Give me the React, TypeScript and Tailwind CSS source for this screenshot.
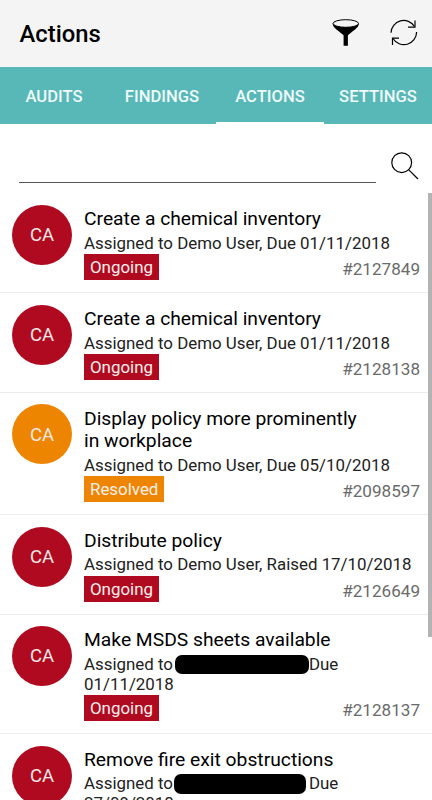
import clsx from 'clsx';

type Status = 'Ongoing' | 'Resolved';

interface Action {
  id: string;
  title: string[];
  assignee?: string;
  redacted?: string;
  date?: string;
  status: Status;
}

const TABS = ['AUDITS', 'FINDINGS', 'ACTIONS', 'SETTINGS'];

const ACTIONS: Action[] = [
  {
    id: '#2127849',
    title: ['Create a chemical inventory'],
    assignee: 'Demo User, Due 01/11/2018',
    status: 'Ongoing',
  },
  {
    id: '#2128138',
    title: ['Create a chemical inventory'],
    assignee: 'Demo User, Due 01/11/2018',
    status: 'Ongoing',
  },
  {
    id: '#2098597',
    title: ['Display policy more prominently', 'in workplace'],
    assignee: 'Demo User, Due 05/10/2018',
    status: 'Resolved',
  },
  {
    id: '#2126649',
    title: ['Distribute policy'],
    assignee: 'Demo User, Raised 17/10/2018',
    status: 'Ongoing',
  },
  {
    id: '#2128137',
    title: ['Make MSDS sheets available'],
    redacted: 'ml-[2px] w-[134px] h-[19px]',
    date: '01/11/2018',
    status: 'Ongoing',
  },
  {
    id: '#2128136',
    title: ['Remove fire exit obstructions'],
    redacted: 'ml-px mr-[3px] w-[132px] h-[20px]',
    date: '27/09/2018',
    status: 'Ongoing',
  },
];

const STATUS_COLOR: Record<Status, string> = {
  Ongoing: 'bg-[#b00a20]',
  Resolved: 'bg-[#ee8500]',
};

function FilterIcon() {
  return (
    <svg width="28" height="28" viewBox="0 0 28 28" fill="none">
      <path
        d="M0.600 4.500C0.800 9 7 12 11.600 16.200V26.800h4.300V16.200C20.500 12 26.800 9 27 4.500Z"
        fill="black"
      />
      <ellipse cx="13.800" cy="4.500" rx="12.700" ry="3.800" fill="#f4f4f4" stroke="black" />
    </svg>
  );
}

function RefreshIcon() {
  return (
    <svg width="28" height="28" viewBox="0 0 28 28" fill="none" stroke="black" strokeWidth="1.200">
      <path d="M1 13.800A12.700 12.700 0 0 1 24.500 7.500" />
      <path d="M25 1.500v6.700h-7" />
      <path d="M26.600 13A12.700 12.700 0 0 1 3 19.500" />
      <path d="M2.500 25.900v-6.700h6.500" />
    </svg>
  );
}

function SearchIcon() {
  return (
    <svg width="28" height="28" viewBox="0 0 28 28" fill="none" stroke="black" strokeWidth="1.200">
      <circle cx="10.700" cy="10.700" r="9.900" />
      <path d="M17.800 17.800L27 27" />
    </svg>
  );
}

function ActionRow({ action }: { action: Action }) {
  const { id, title, assignee, redacted, date, status } = action;
  const color = STATUS_COLOR[status];

  return (
    <li className="flex shrink-0 gap-3 border-b border-[#ececec] px-3 pt-[11.600px] pb-3">
      <div
        className={clsx(
          'flex size-[60px] shrink-0 items-center justify-center rounded-full pt-[2px] text-[18.500px] text-[#fbe9e7]',
          color
        )}
      >
        CA
      </div>
      <div className="min-w-0 flex-1 pt-[3.100px] whitespace-nowrap">
        <h2 className="text-[19.270px] leading-[22.500px] text-black">
          {title.map((line) => (
            <span key={line} className="block">
              {line}
            </span>
          ))}
        </h2>
        <div className="mt-[3.200px] text-[16.890px] leading-[19.700px] text-[#222]">
          {redacted ? (
            <>
              <div className="flex h-[19.700px] items-center">
                Assigned to
                <span className={clsx('rounded-[7px] bg-black', redacted)} />
                Due
              </div>
              <div>{date}</div>
            </>
          ) : (
            <div>Assigned to {assignee}</div>
          )}
        </div>
        <div className="mt-[0.600px] flex h-[26px] items-start justify-between">
          <span
            className={clsx(
              'flex h-[26px] items-center px-1.5 pt-[1.500px] text-[16.900px] text-[#fff0ee]',
              color
            )}
          >
            {status}
          </span>
          <span className="pt-[5.200px] text-[17.100px] leading-[20px] text-[#6a6a6a]">{id}</span>
        </div>
      </div>
    </li>
  );
}

export default function App() {
  return (
    <div className="flex h-[800px] w-[432px] flex-col overflow-hidden bg-white font-[Roboto,sans-serif]">
      <header className="flex h-[66.500px] shrink-0 items-center justify-between bg-[#f4f4f4] pr-[14px] pl-[19.500px]">
        <h1 className="pt-[3px] text-[23.800px] font-medium text-black">Actions</h1>
        <div className="flex gap-[30px]">
          <FilterIcon />
          <RefreshIcon />
        </div>
      </header>

      <nav className="grid h-[57.500px] shrink-0 grid-cols-4 bg-[#58b7b7]">
        {TABS.map((tab) => (
          <button
            key={tab}
            type="button"
            className={clsx(
              'border-b-2 pt-[6px] text-[16.600px] font-medium text-[#effafa]',
              tab === 'ACTIONS' ? 'border-white' : 'border-transparent'
            )}
          >
            {tab}
          </button>
        ))}
      </nav>

      <div className="flex h-[69px] shrink-0 justify-between pr-[13px] pl-[19px]">
        <input aria-label="Search" className="h-[59px] w-[357px] border-b border-[#555] outline-none" />
        <button type="button" aria-label="Search" className="mt-[28px] h-[28px]">
          <SearchIcon />
        </button>
      </div>

      <main className="relative flex min-h-0 flex-1 flex-col overflow-hidden">
        <ul className="flex flex-col pt-[0.500px]">
          {ACTIONS.map((action) => (
            <ActionRow key={action.id} action={action} />
          ))}
        </ul>
        {/* scroll thumb */}
        <div className="absolute top-0 right-0 h-[444px] w-1 bg-[#b3b3b3]" />
      </main>
    </div>
  );
}
